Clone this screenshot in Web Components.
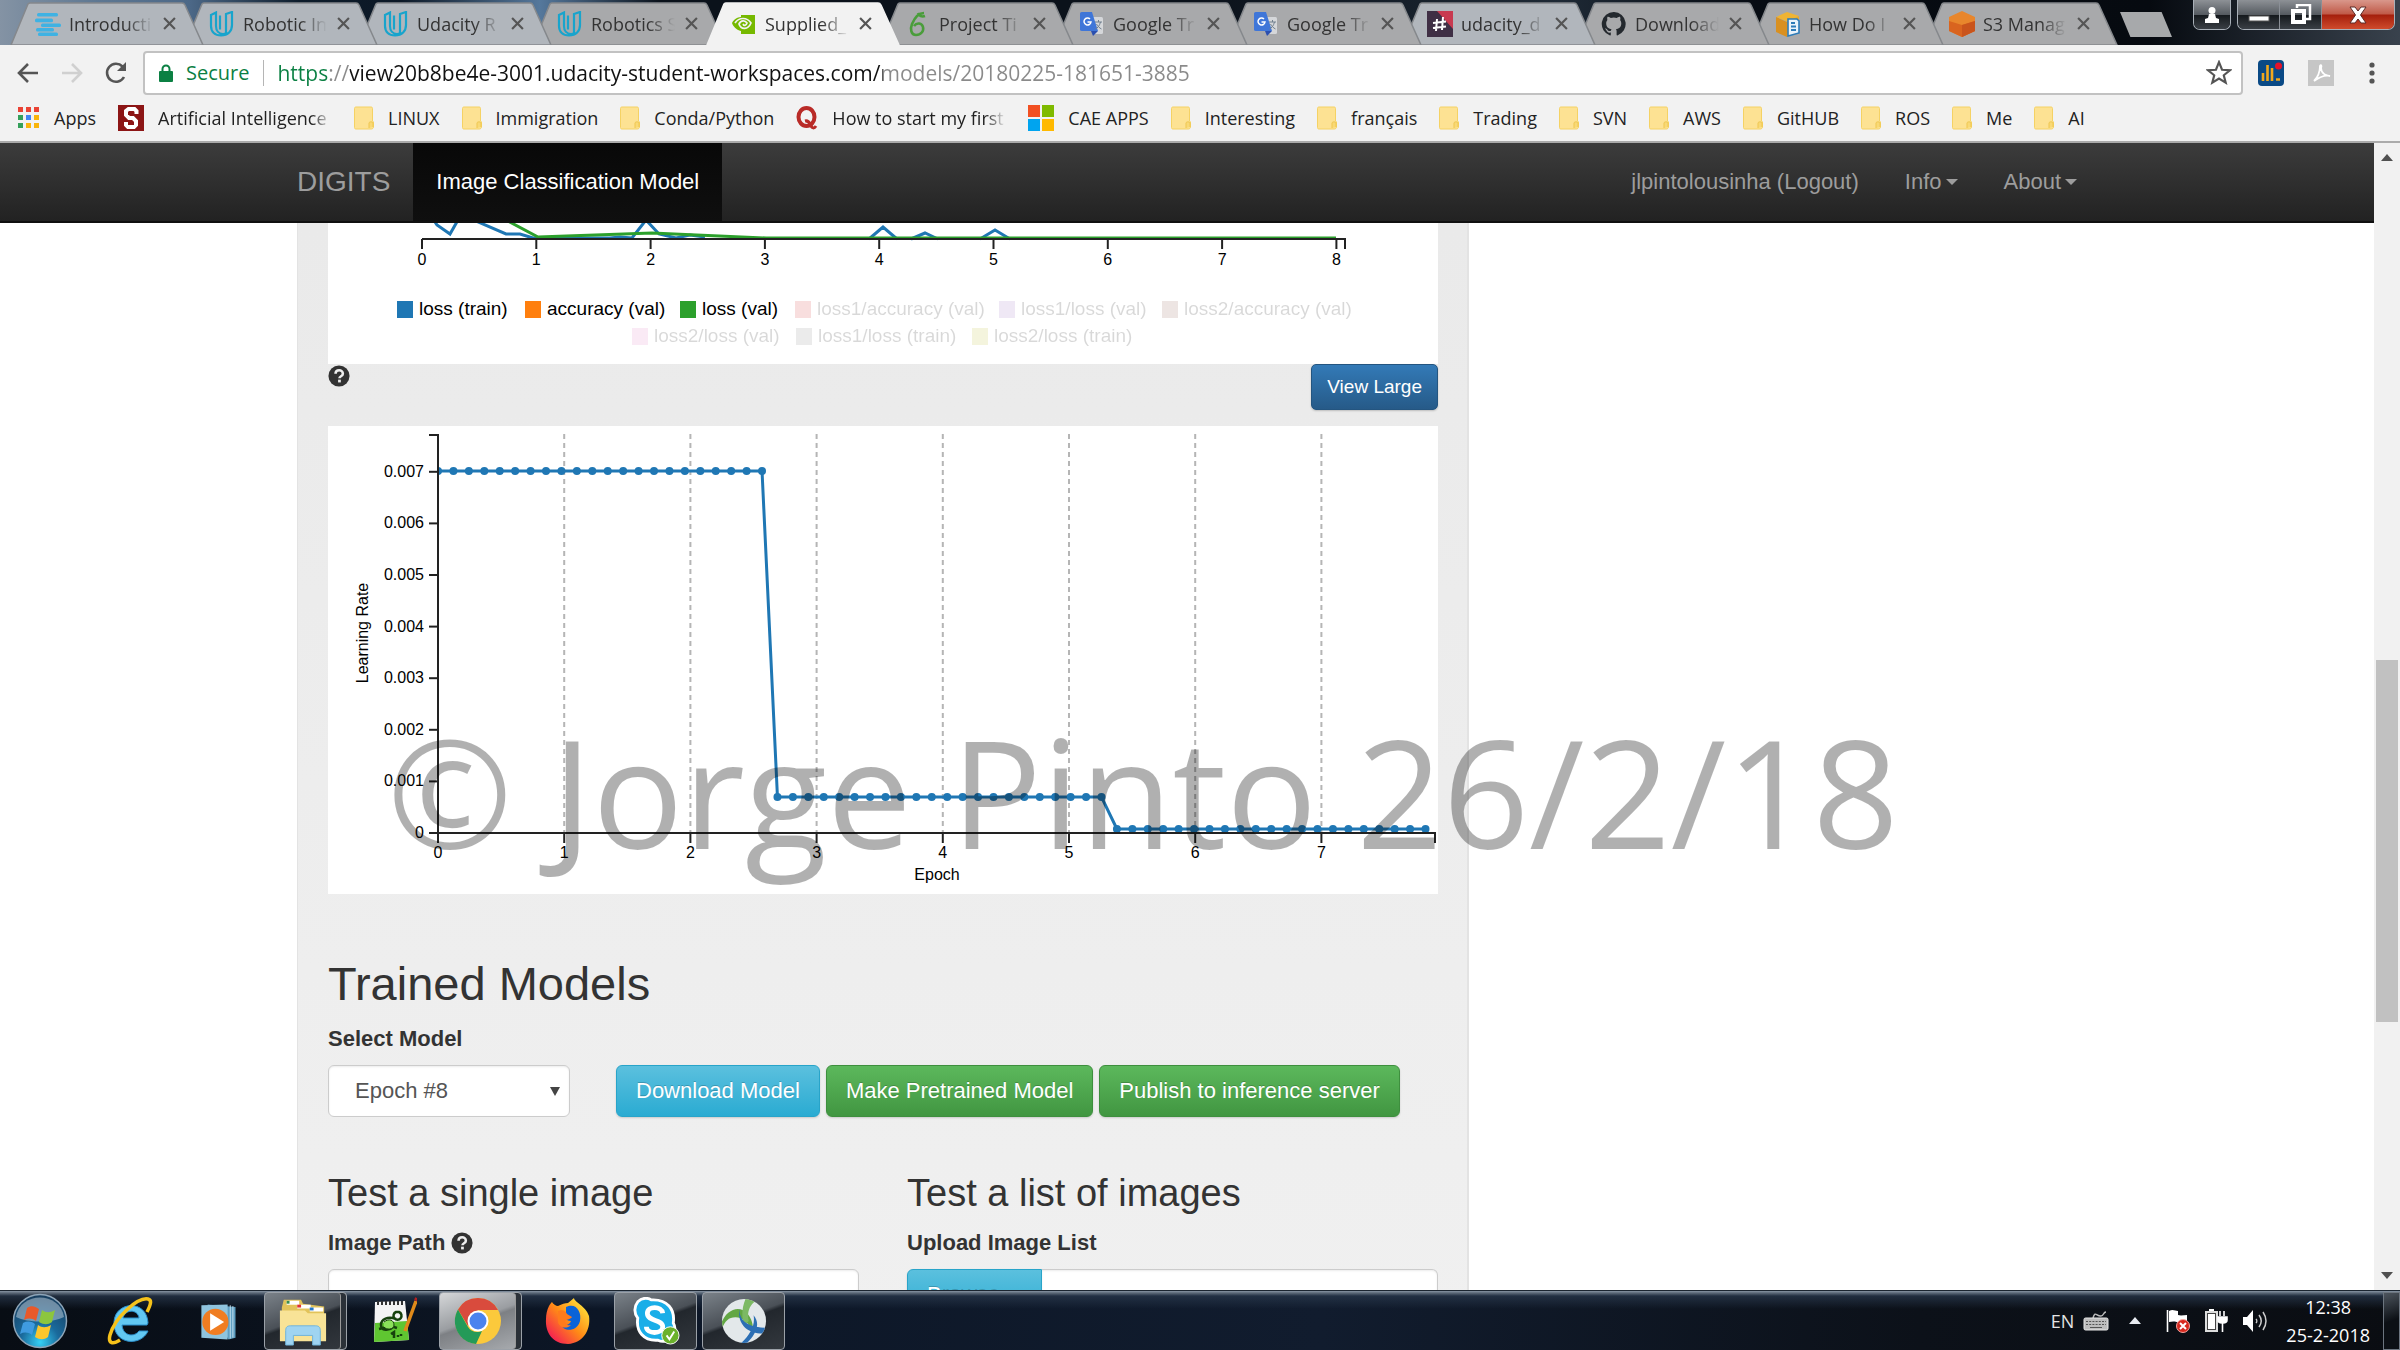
<!DOCTYPE html>
<html lang="en">
<head>
<meta charset="utf-8">
<title>Supplied_ - DIGITS</title>
<style>
  html, body { margin: 0; height: 100%; }
  body { display: flex; flex-direction: column; overflow: hidden; background: #fff;
    font: 22px/32px "Liberation Sans", Arial, sans-serif; color: #333;
    --chrome-font: "Open Sans", "Noto Sans", sans-serif; }
</style>
</head>
<body>
<tab-strip>
  <browser-tab icon="docs" tint="glass">Introducti</browser-tab>
  <browser-tab icon="udacity" tint="glass">Robotic In</browser-tab>
  <browser-tab icon="udacity" tint="glass">Udacity R</browser-tab>
  <browser-tab icon="udacity">Robotics S</browser-tab>
  <browser-tab icon="nvidia" active>Supplied_</browser-tab>
  <browser-tab icon="project">Project Ti</browser-tab>
  <browser-tab icon="translate">Google Tr</browser-tab>
  <browser-tab icon="translate">Google Tr</browser-tab>
  <browser-tab icon="slack" tint="glass">udacity_d</browser-tab>
  <browser-tab icon="github">Download</browser-tab>
  <browser-tab icon="howdo">How Do I</browser-tab>
  <browser-tab icon="cube">S3 Manag</browser-tab>
</tab-strip>
<tool-bar></tool-bar>
<bookmark-bar>
  <book-mark icon="apps">Apps</book-mark>
  <book-mark icon="stanford" long>Artificial Intelligence C</book-mark>
  <book-mark icon="folder">LINUX</book-mark>
  <book-mark icon="folder">Immigration</book-mark>
  <book-mark icon="folder">Conda/Python</book-mark>
  <book-mark icon="quora" long>How to start my first w</book-mark>
  <book-mark icon="microsoft">CAE APPS</book-mark>
  <book-mark icon="folder">Interesting</book-mark>
  <book-mark icon="folder">français</book-mark>
  <book-mark icon="folder">Trading</book-mark>
  <book-mark icon="folder">SVN</book-mark>
  <book-mark icon="folder">AWS</book-mark>
  <book-mark icon="folder">GitHUB</book-mark>
  <book-mark icon="folder">ROS</book-mark>
  <book-mark icon="folder">Me</book-mark>
  <book-mark icon="folder">AI</book-mark>
</bookmark-bar>
<page-view>
  <digits-nav></digits-nav>
  <digits-panel>
    <loss-chart></loss-chart>
    <chart-tools></chart-tools>
    <rate-chart></rate-chart>
    <model-form></model-form>
  </digits-panel>
  <water-mark>© Jorge Pinto 26/2/18</water-mark>
</page-view>
<task-bar></task-bar>

<script>
const ICONS = {
  docs: ['0 0 26 24', '<g fill="#3fb2e3"><rect x="2" y="1" width="21" height="3.6" rx="1.5"/><rect x="0" y="6.6" width="18" height="3.6" rx="1.5"/><rect x="6" y="11.4" width="20" height="3.6" rx="1.5"/><rect x="1" y="16" width="18" height="3.4" rx="1.5"/><rect x="3" y="20.6" width="20" height="3.4" rx="1.5"/></g>'],
  udacity: ['0 0 26 26', '<path d="M2 4 7 1.5V15c0 5 3 8 7 8 2 0 3-1 3-1V3l6-2v13c0 6-4 10.500-11 10.500C6 24.500 2 21 2 15ZM11 4.500v14" fill="none" stroke="#18a4cc" stroke-width="2.200"/>'],
  nvidia: ['0 0 26 26', '<path fill="#76b900" d="M10 4h14v19H10v-3C5 19 2 15 1 12 3 8 6 6.500 10 6Z"/><path d="M4 12c4-6 12-6 16 0-3 7-10 7-12 1 2-4 6-4 8-1-1 3-3 3-4 1" fill="none" stroke="#f2f2f2" stroke-width="1.700"/>'],
  project: ['0 0 26 26', '<path d="M19 2c-5 0-9 4-12 11-2 5-1 11 4 11s8-4 7-8-6-5-9-1M13 2c1 3 4 4 7 3" fill="none" stroke="#4a9d3b" stroke-width="2.600"/>'],
  translate: ['0 0 26 26', '<rect x="13" y="6" width="11" height="17" rx="1.500" fill="#d5d7da"/><path fill="#3f76d8" d="M3 1h10l6 19H3c-2 0-2-1-2-2V3c0-1 0-2 2-2Z"/><path fill="#2b4fae" d="M12 20h7l-5 5Z"/><path d="M11 8a3.500 3.500 0 1 0 1 3H8.500" fill="none" stroke="#fff" stroke-width="1.500"/><path d="M16 11h7M19.500 9v2m2 0c-1 4-3 6-5 7m1-5c1 2 3 4 5 5" stroke="#71808f" fill="none"/>'],
  slack: ['0 0 26 26', '<path fill="#3f2f45" d="M0 0h26v26H0z"/><path fill="#c83a50" d="M10 0h16v18Z"/><path d="M10 8 9 20M16 6l-1 13M6 12l13-1.500M6 17l13-1.500" stroke="#fff" stroke-width="2"/>'],
  github: ['0 0 26 26', '<path fill="#24292e" d="M13 1a12 12 0 0 0-4 23.400c.6.100.8-.3.800-.6v-2.200c-3.300.7-4-1.600-4-1.600-.6-1.400-1.300-1.800-1.300-1.800-1.100-.7.100-.7.100-.7 1.200.1 1.800 1.200 1.800 1.200 1.100 1.800 2.800 1.300 3.500 1 .1-.8.400-1.300.8-1.600-2.700-.3-5.500-1.300-5.500-5.900 0-1.300.5-2.400 1.200-3.200-.1-.3-.5-1.500.1-3.200 0 0 1-.3 3.300 1.200a11.500 11.500 0 0 1 6 0C18 5.500 19 5.800 19 5.800c.7 1.700.3 2.900.1 3.200.8.800 1.200 1.900 1.200 3.200 0 4.600-2.800 5.600-5.500 5.900.4.400.8 1.100.8 2.200v3.500c0 .3.200.7.800.6A12 12 0 0 0 13 1Z"/>'],
  howdo: ['0 0 26 26', '<path fill="#f0b433" d="m1 6 11-5 12 4-11 6Z"/><path fill="#d99020" d="M1 6v15l11 5V11Z"/><path fill="#e8a92e" d="m24 5-12 6v14l12-6Z"/><path d="M13 8h9l2 2v12l-11 3Z" fill="#e9f3fb" stroke="#2c7bb8" stroke-width="1.600"/><path d="M16 12h4M16 15.500h5M16 19h5" stroke="#2c7bb8" stroke-width="1.800"/>'],
  cube: ['0 0 26 26', '<path fill="#e8862c" d="M13 0 26 6v14l-13 6L0 20V6Z"/><path fill="#d9641f" d="m0 10 13 4 13-4v10l-13 6-13-6Z"/><path fill="#c9541c" d="m13 14 13-4v10l-13 6Z"/>'],
  apps: ['0 0 22 22', [['#ea4335','#ea4335','#ea4335'],['#34a05a','#4285f4','#f9b50b'],['#34a05a','#f9b50b','#f9b50b']].map((r,j)=>r.map((c,i)=>`<rect x="${i*8}" y="${j*8}" width="5" height="5" fill="${c}"/>`).join('')).join('')],
  stanford: ['0 0 26 26', '<path fill="#8c1515" d="M0 0h26v26H0z"/><path d="M18.500 9V6l-2-2h-6L8 6v4l3 3h4l3 3v4l-2 2h-6l-2-2v-3" fill="none" stroke="#fff" stroke-width="4"/>'],
  folder: ['0 0 20 24', '<path d="M2 1h15c1 0 1.500.5 1.500 1.500V15l1 1v5c0 1-1 2-2 2H2c-1 0-1.500-.5-1.500-1.500v-19C.5 1.500 1 1 2 1Z" fill="#fde293" stroke="#f5d264"/><path d="M15 22v-5c0-1 3-2 4 0v4" fill="#f9d976" stroke="#efc750"/>'],
  quora: ['0 0 22 24', '<ellipse cx="10.500" cy="11" rx="8" ry="9" fill="none" stroke="#b92b27" stroke-width="4"/><path d="M9 15c4-1 5 3 6 5s3 3 5 0" fill="none" stroke="#b92b27" stroke-width="3"/>'],
  microsoft: ['0 0 26 26', '<path fill="#f25022" d="M0 0h12v12H0z"/><path fill="#7fba00" d="M14 0h12v12H14z"/><path fill="#00a4ef" d="M0 14h12v12H0z"/><path fill="#ffb900" d="M14 14h12v12H14z"/>'],
  back: ['0 0 24 24', '<path d="M22 12H4m8-9-9 9 9 9" fill="none" stroke="#555" stroke-width="2.600"/>'],
  forward: ['0 0 24 24', '<path d="M2 12h18m-8-9 9 9-9 9" fill="none" stroke="#d0d0d0" stroke-width="2.600"/>'],
  reload: ['0 0 24 24', '<path d="M20 16a9 9 0 1 1-1.500-10.500" fill="none" stroke="#555" stroke-width="2.600"/><path d="M22 1v9h-9Z" fill="#555"/>'],
  lock: ['0 0 14 18', '<rect x="0" y="7" width="14" height="11" rx="1" fill="#0b8043"/><path d="M3.500 8V5a3.500 3.500 0 0 1 7 0v3" fill="none" stroke="#0b8043" stroke-width="2"/>'],
  star: ['0 0 24 24', '<path d="m12 2 2.800 7 7.200.5-5.600 4.600L18.200 21 12 17.200 5.800 21l1.800-6.900L2 9.500 9.200 9Z" fill="none" stroke="#555" stroke-width="2"/>'],
  stats: ['0 0 26 26', '<rect width="26" height="26" rx="4" fill="#0a4a86"/><path d="M5 13v8M9.500 5v16M14 8v13M18 19.500h4" stroke="#f0a81c" stroke-width="2.600" /><circle cx="20.500" cy="6" r="3.500" fill="#e5122a"/>'],
  pdf: ['0 0 26 26', '<path fill="#c6c6c6" d="M0 0h26v26H0z"/><path d="M6 21c3-3 6-8 6-15 1-2 2 0 1 2 0 5 5 8 9 8-4-1-9 0-16 5Z" fill="none" stroke="#fff" stroke-width="1.800"/>'],
  dots: ['0 0 6 22', '<g fill="#555"><circle cx="3" cy="3" r="2.600"/><circle cx="3" cy="11" r="2.600"/><circle cx="3" cy="19" r="2.600"/></g>'],
  close: ['0 0 12 12', '<path d="m1 1 10 10M11 1 1 11" stroke="#555" stroke-width="2"/>'],
  help: ['0 0 24 24', '<circle cx="12" cy="12" r="11.500" fill="#333"/><path d="M8.200 9.500c0-5 8-5 8 0 0 3-3.700 2.500-3.700 5" fill="none" stroke="#eee" stroke-width="2.800"/><path fill="#eee" d="M11 16h3v3h-3z"/>'],
  user: ['0 0 20 20', '<g fill="#fff"><circle cx="10" cy="5.500" r="3.500"/><path d="M7 9h6l1 4 3 1v4H3v-4l3-1Z"/></g>'],
  min: ['0 0 22 22', '<rect x="1" y="12" width="20" height="5" fill="#fff" stroke="#555"/>'],
  restore: ['0 0 22 22', '<path d="M7 4V1h13v14h-4" fill="none" stroke="#fff" stroke-width="2.500"/><rect x="3" y="7" width="11" height="11" fill="none" stroke="#fff" stroke-width="4"/>'],
  exit: ['0 0 18 18', '<path d="M1 1h5l3 4 3-4h5l-5.500 8L17 17h-5l-3-4-3 4H1l5.500-8Z" fill="#fff" stroke="#5b2a26"/>'],
  orb: ['0 0 56 56', '<defs><radialGradient id="o" cx=".5" cy=".9" r=".9"><stop offset="0" stop-color="#35d0f5"/><stop offset=".4" stop-color="#1a6a9c"/><stop offset="1" stop-color="#173b5b"/></radialGradient></defs><circle cx="28" cy="28" r="26.500" fill="url(#o)" stroke="#8ea5b8" stroke-width="1.500"/><path d="M4 24C8-2 48-2 52 24c-12 6-36 6-48 0Z" fill="#c5d4e0" opacity=".5"/><path fill="#e8592a" d="M15 15c4-3 8-2 12 1l-3 12c-4-3-8-3-12-1Z"/><path fill="#8cc63e" d="M30 17c4 3 8 3 13 0l-3 12c-4 3-8 3-13 0Z"/><path fill="#3f9be0" d="M11 30c4-2 8-2 12 1l-3 11c-4-3-8-3-12-1Z"/><path fill="#fcc62d" d="M26 32c4 3 8 3 13 0l-3 12c-4 3-8 3-13 0Z"/>'],
  ie: ['0 0 48 48', '<path d="M40 28H15c1 12 13 12 17 6h9C34 50 6 48 7 25 8 4 40 2 41 26ZM16 21h16c-1-9-14-9-16 0Z" fill="#62c8f2" stroke="#2b8fcc"/><path d="M40 15c4-8 5-12 1-13C31 0 8 20 3 38c-2 8 2 10 10 5" fill="none" stroke="#f6c21a" stroke-width="3.500"/>'],
  media: ['0 0 48 48', '<path fill="#5f9fc2" d="m12 5 32 3v35l-8 2Z"/><path fill="#8fc4de" d="m5 6 30-1v40L5 43Z"/><path d="M38 6v38m3-37v36" stroke="#cfe8f4"/><circle cx="21" cy="25" r="15" fill="#f07d22"/><path fill="#fff" d="m15 15 16 10-16 10Z"/>'],
  explorer: ['0 0 52 52', '<path fill="#e2c35a" d="M4 12 6 4h18l2 4 22 3v32H4Z"/><path fill="#fff" d="M9 5h13v4H9zM20 9h14v4H20zM33 12h14v4H33z"/><path fill="#3a8d4f" d="M9 5h3v3H9z"/><path fill="#d33" d="M20 9h4v3h-4z"/><path fill="#27c" d="M33 12h4v3h-4z"/><path fill="#f8e397" d="M2 15h26l3 3h19v29H2Z"/><path fill="#9fd4f1" stroke="#6fb3da" d="M8 51V36c0-4 2-5 5-5h26c3 0 5 1 5 5v15h-8V41H16v10Z"/>'],
  npp: ['0 0 48 48', '<path fill="#f4f4f4" d="m6 5 30-1 4 39L5 45Z"/><path fill="#5fc631" d="m6 26 32-2 2 19L5 45Z"/><path d="M8 6h26" stroke="#333" stroke-width="4" stroke-dasharray="2 2"/><path d="M27 15a4 4 0 1 0 3 0ZM27 22c-8-3-15 0-15 6s8 6 12 2M10 32l12-3 6 2M22 37l3-2v6m4-3v2m3-3v2" fill="none" stroke="#17410d" stroke-width="2.500"/><path d="M15 25c5-4 10-2 10 3s-8 5-10 2" fill="#8be05b" stroke="#17410d"/><path d="M47 4 36 34" stroke="#e08a1a" stroke-width="3.500"/><path d="m47 4 1-3" stroke="#b52020" stroke-width="4"/>'],
  chrome: ['0 0 48 48', '<circle cx="24" cy="24" r="23" fill="#fbc93c"/><path fill="#d94b3d" d="M4 12.500A23 23 0 0 1 44 13H24L14 29Z"/><path fill="#249a58" d="M4 12.500 14 30c3 5 9 6 14 4l-6 13A23 23 0 0 1 4 12.500Z"/><circle cx="24" cy="24" r="10.500" fill="#fff"/><circle cx="24" cy="24" r="8.500" fill="#4a83ee"/>'],
  firefox: ['0 0 48 48', '<defs><linearGradient id="f" x1="1" y1="0" x2="0" y2="1"><stop offset=".1" stop-color="#ffe33a"/><stop offset=".5" stop-color="#ff8a16"/><stop offset=".85" stop-color="#f5284e"/></linearGradient></defs><path d="M5 9c1-2 2-3 3-4 1 2 4 4 6 4 4-2 7-3 10-3l6-5c0 4 12 8 15 18 2 14-6 27-21 28C9 47 1 36 2 22c0-5 1-9 3-13Z" fill="url(#f)"/><path d="M22 10c10-5 16 5 14 14-3 12-18 10-18 4 5 1 8-1 9-4-4 0-8-3-5-8Z" fill="#0a63d8"/><path d="M14 14c4-2 8 0 9 3l5 3c-2 3-6 2-7 4-1 3 3 5 6 4-5 5-13 2-13-4Z" fill="#ff7b1c"/>'],
  skype: ['0 0 50 50', '<path d="M6 5c5-5 11-4 14-2 17-1 25 10 23 24 3 5 2 11-2 15-4 5-10 5-14 3C12 46 4 36 6 22 2 17 2 10 6 5Z" fill="#1aaee8" stroke="#fff" stroke-width="3"/><path d="M32 17c-1-8-16-8-16 0 0 9 16 6 16 14 0 8-17 8-17 0" fill="none" stroke="#fff" stroke-width="5"/><circle cx="40" cy="40" r="9" fill="#6bb12c" stroke="#fff"/><path d="m36 40 3 4 5-8" fill="none" stroke="#fff" stroke-width="2"/>'],
  cisco: ['0 0 48 48', '<clipPath id="k"><circle cx="24" cy="24" r="23"/></clipPath><g clip-path="url(#k)"><path fill="#e3e8ea" d="M0 0h48v48H0z"/><path d="M0 27C6 11 20 7 28 17c4 5 6 11 5 18-4-9-10-15-18-15C8 20 4 24 1 32Z" fill="#63a744"/><path d="m26 0 10 3c-7 5-9 13-7 21l-5 5c-3-10-2-20 2-29Z" fill="#7cb964"/><path d="M19 11c0 13 9 20 29 20l-2 6c-18 1-29-9-27-26ZM34 18c8 9 2 21-8 30h-6c10-9 16-19 14-30Z" fill="#2c6fb4"/></g>'],
  keyboard: ['0 0 26 20', '<path d="M10 7c2-8 4-1 8-2 3 0 2-4 5-4" fill="none" stroke="#bbb" stroke-width="1.500"/><rect x="1" y="7" width="24" height="12" rx="1.500" fill="#bdbdbd" stroke="#e8e8e8"/><path d="M3 10.500h20M3 13.500h20" stroke="#555" stroke-dasharray="2 1.200"/><path d="M7 16.500h12" stroke="#555"/>'],
  up: ['0 0 12 8', '<path fill="#e8ecf2" d="m6 0 6 7H0Z"/>'],
  flag: ['0 0 24 24', '<path d="M1.500 1v22" stroke="#fff" stroke-width="1.600"/><path fill="#fff" d="M3 2c4-2 6 0 9 0v4c3 1 6 0 9 0v9c-8 0-10-4-18-2Z"/><circle cx="17" cy="17" r="6.500" fill="#d6281e" stroke="#f6a49e"/><path d="m14 14 6 6m0-6-6 6" stroke="#fff" stroke-width="2"/>'],
  battery: ['0 0 24 24', '<path d="M5 1h5" stroke="#fff" stroke-width="3"/><rect x="2" y="3" width="11" height="19" fill="#fff" stroke="#ddd" stroke-width="2"/><rect x="3.500" y="4.500" width="8" height="16" fill="none" stroke="#444"/><path d="M16 2v5m4-5v5M14 8h9v3c0 2-2 3-4 3h-1c-2 0-4-1-4-3ZM18.500 14v9" fill="#fff" stroke="#fff" stroke-width="1.600"/>'],
  speaker: ['0 0 26 24', '<path fill="#fff" d="M1 8h4l6-7v22l-6-7H1Z"/><path d="M14 10c1 1 1 3 0 4m3-8c3 4 3 8 0 12m4-15c4 6 4 12 0 18" fill="none" stroke="#ccc" stroke-width="1.500"/>']
};
const icon = (name, w, h = w) => {
  const [box, art] = ICONS[name];
  return `<svg class="i" aria-hidden="true" viewBox="${box}" width="${w}" height="${h}">${art}</svg>`;
};
const BASE = `:host,*{box-sizing:border-box}.i{display:block;flex:none}button{font:inherit;color:inherit;border:0;background:none;padding:0;margin:0;cursor:pointer}a{color:inherit;text-decoration:none}`;
const define = (tag, css, html) => customElements.define(tag, class extends HTMLElement {
  constructor() {
    super();
    this.attachShadow({ mode: 'open' }).innerHTML =
      `<style>${BASE}${css}</style>${typeof html === 'function' ? html(this) : html}`;
  }
});

/* ---------- browser window ---------- */
define('tab-strip', `
  :host{display:flex;flex:none;height:45px;padding-left:10px;justify-content:space-between;position:relative;
    background:linear-gradient(90deg,#8493a4 0,#5d7792 100px,#4c6887 190px,#0d1c2b 300px,#0c1826 400px,#55789c 540px,#0b121b 660px,#0b121b 1200px,#1e2935 1560px,#070c13 1750px,#060a10 2150px,#39424d 2400px)}
  .tabs{display:flex;padding-top:2px}
  .new{width:52px;height:25px;margin:10px 0 0 22px;background:#a7a9ab;clip-path:polygon(0 0,80% 0,100% 100%,20% 100%)}
  .ctl{display:flex;gap:6px;height:30px;padding-right:5px}
  .grp{display:flex;border:1px solid #a9b0b8;border-top:0;border-radius:0 0 7px 7px;overflow:hidden}
  .ctl button{display:grid;place-items:center;width:42px;background:linear-gradient(#8d9196,#565b61 50%,#15191d 52%,#3a3f45);border-right:1px solid #8a8f96}
  .ctl .u{width:36px;border:0}
  .ctl .x{width:72px;border:0;background:linear-gradient(#d9978b,#c05a48 48%,#a51f0c 52%,#cf4b2c)}`,
  `<div class="tabs" role="tablist"><slot></slot><button class="new" aria-label="New tab"></button></div>
   <div class="ctl"><div class="grp"><button class="u" aria-label="Profile">${icon('user',20)}</button></div>
   <div class="grp"><button aria-label="Minimize">${icon('min',22)}</button><button aria-label="Restore">${icon('restore',22)}</button><button class="x" aria-label="Close">${icon('exit',18)}</button></div></div>`);

define('browser-tab', `
  :host{display:flex;align-items:center;position:relative;width:194px;height:43px;margin-right:-20px;padding:0 28px 0 25px;
    font:18px/24px var(--chrome-font);color:#333;--fill:#a8a9ab}
  :host([tint]){--fill:#b1b6bc}
  :host([active]){--fill:#f2f2f2;z-index:20}
  .bg{position:absolute;inset:0;width:100%;height:100%;z-index:0}
  .bg path{fill:var(--fill);stroke:#85888c;stroke-width:1.500}
  :host([active]) .bg path{stroke:#f2f2f2}
  .i,.t,.c{position:relative}
  .t{flex:1;margin:0 10px 0 8px;overflow:hidden;white-space:nowrap;-webkit-mask-image:linear-gradient(90deg,#000 68%,transparent)}`,
  el => `<svg class="bg" aria-hidden="true" viewBox="0 0 194 43" preserveAspectRatio="none"><path d="M1 43 18 2q1-1 2-1h152q2 0 3 2l18 40Z"/></svg>
   ${icon(el.getAttribute('icon'), 26)}<span class="t" role="tab"><slot></slot></span><button class="c" aria-label="Close tab">${icon('close', 13)}</button>`);
document.querySelectorAll('browser-tab:not([active])').forEach((t, i) => t.style.zIndex = 12 - i);

define('tool-bar', `
  :host{display:flex;flex:none;align-items:center;height:50px;padding:6px 25px 0 16px;background:#f2f2f2;font:20px/28px var(--chrome-font)}
  nav{display:flex;gap:20px;margin-right:15px}
  .box{flex:1;display:flex;align-items:center;height:44px;border:2px solid #c2c2c2;border-radius:4px;background:#fff;padding:0 9px 0 14px}
  .s{color:#0b8043;margin:0 14px 0 13px}
  .bar{width:1px;height:26px;background:#b5b5b5;margin-right:13px}
  input{flex:1;min-width:0;border:0;outline:0;padding:0;font:inherit;font-size:21px;height:28px;-webkit-text-fill-color:transparent;
    background:linear-gradient(90deg,#0b8043 0 51px,#8a8a8a 51px 73px,#111 73px 606px,#8a8a8a 606px);-webkit-background-clip:text;background-clip:text}
  .ext{display:flex;align-items:center;gap:24px;margin-left:15px}
  .ext button:last-child{margin-left:11px}`,
  `<nav><button aria-label="Back">${icon('back',24)}</button><button aria-label="Forward">${icon('forward',24)}</button><button aria-label="Reload">${icon('reload',24)}</button></nav>
   <div class="box">${icon('lock',14,18)}<label class="s" for="url">Secure</label><span class="bar"></span>
   <input id="url" type="text" spellcheck="false" value="https://view20b8be4e-3001.udacity-student-workspaces.com/models/20180225-181651-3885">
   <button aria-label="Bookmark">${icon('star',26)}</button></div>
   <div class="ext"><button aria-label="Statistics">${icon('stats',26)}</button><button aria-label="PDF">${icon('pdf',26)}</button><button aria-label="Menu">${icon('dots',6,22)}</button></div>`);

define('bookmark-bar', `
  :host{display:flex;flex:none;align-items:center;gap:22px;height:48px;padding:0 18px;background:#f2f2f2;border-bottom:2px solid #ababab;font:18px/24px var(--chrome-font);color:#222}`,
  `<slot></slot>`);
define('book-mark', `
  :host{display:block} a{display:flex;align-items:center;gap:14px;white-space:nowrap}
  :host([long]) span{width:174px;overflow:hidden;-webkit-mask-image:linear-gradient(90deg,#000 88%,transparent)}`,
  el => { const n = el.getAttribute('icon'); const [w, h] = n === 'folder' ? [20, 24] : n === 'apps' ? [22, 22] : n === 'quora' ? [22, 24] : [26, 26];
    return `<a href="#">${icon(n, w, h)}<span><slot></slot></span></a>`; });

/* ---------- page ---------- */
define('page-view', `
  :host{display:flex;flex:1;min-height:0;position:relative;overflow:hidden}
  main{flex:1;min-width:0;overflow:hidden;background:#fff}
  .sb{display:flex;flex-direction:column;align-items:center;width:26px;padding:11px 2px;background:#f1f1f1}
  .a{width:0;height:0;border:6px solid transparent;border-top:0;border-bottom:7px solid #505050}
  .a.d{border-bottom:0;border-top:7px solid #505050}
  .track{flex:1;width:100%;display:flex;flex-direction:column;padding:7px 0}
  .track::before{content:"";flex:492}.thumb{flex:361;background:#c1c1c1}.track::after{content:"";flex:243}`,
  `<main><slot></slot></main><div class="sb" aria-hidden="true"><i class="a"></i><div class="track"><div class="thumb"></div></div><i class="a d"></i></div>`);

define('digits-nav', `
  :host{display:block;height:80px;background:linear-gradient(#3c3c3c,#222);border-bottom:2px solid #101010;color:#9d9d9d}
  nav{display:flex;align-items:stretch;max-width:1780px;height:100%;margin:0 auto}
  a{display:flex;align-items:center;padding:0 23px}
  .b{font-size:28px;padding-left:0}
  .on{color:#fff;background:linear-gradient(#080808,#0f0f0f)}
  .r{display:flex;margin-left:auto}.r a:last-child{padding-right:0}
  .c{border:6px solid transparent;border-top-color:currentColor;border-bottom:0;margin-left:4px}`,
  `<nav><a class="b" href="#">DIGITS</a><a class="on" href="#">Image Classification Model</a>
   <div class="r"><a href="#">jlpintolousinha (Logout)</a><a href="#">Info<i class="c"></i></a><a href="#">About<i class="c"></i></a></div></nav>`);

define('digits-panel', `
  :host{display:block;max-width:1780px;margin:0 auto}
  section{width:1172px;max-width:100%;min-height:1120px;padding:0 29px 0 30px;border:1px solid #e3e3e3;border-width:0 2px 0 1px;background:linear-gradient(#eaeaea,#f0f0f0)}`,
  `<section><slot></slot></section>`);

const CHART_CSS = `:host{display:block;background:#fff}svg{display:block;width:100%;height:auto;font:16px "Liberation Sans",Arial,sans-serif;fill:#000}
  .ax{fill:none;stroke:#222;stroke-width:2}.l{fill:none;stroke-width:3}.m{text-anchor:middle}.e{text-anchor:end}`;

define('loss-chart', CHART_CSS + `.lg{font-size:19px}.off{opacity:.15}`, () => {
  const ticks = [...Array(9)].map((_, i) => { const x = 94 + i * 114.3; return `<path class="ax" d="M${x} 16v10"/><text class="m" x="${x}" y="42">${i}</text>`; }).join('');
  const legend = [[69,93,0,'#1f77b4','loss (train)'],[197,93,0,'#ff7f0e','accuracy (val)'],[352,93,0,'#2ca02c','loss (val)'],
    [467,93,1,'#d62728','loss1/accuracy (val)'],[671,93,1,'#9467bd','loss1/loss (val)'],[834,93,1,'#8c564b','loss2/accuracy (val)'],
    [304,120,1,'#e377c2','loss2/loss (val)'],[468,120,1,'#7f7f7f','loss1/loss (train)'],[644,120,1,'#bcbd22','loss2/loss (train)']]
    .map(([x,y,off,c,t]) => `<g class="lg${off ? ' off' : ''}"><rect x="${x}" y="${y-15}" width="16" height="17" fill="${c}"/><text x="${x+22}" y="${y-1}">${t}</text></g>`).join('');
  return `<svg viewBox="0 0 1110 141" role="img" aria-label="Training loss by epoch">
    <path class="l" stroke="#1f77b4" d="M107-1l2 3 13 9 8-14M148-2l30 13h14l13 4h77l10-1 12 1 14-18 13 14 17 4 14-3 15 2M541 16l14-12 14 12M583 16l14-6 13 6M652 16l15-9 15 9"/>
    <path class="l" stroke="#2ca02c" d="M178-3l32 17 114-4 114 5h570"/>
    <path class="ax" d="M94 16h923v10"/>${ticks}${legend}</svg>`;
});

define('chart-tools', `
  :host{display:flex;justify-content:space-between;align-items:flex-start;height:62px}
  .h{margin-top:1px}
  .v{height:46px;padding:0 15px;border:1px solid #245580;border-radius:5px;color:#fff;font-size:19px;background:linear-gradient(#337ab7,#265a88);box-shadow:0 1px 2px rgba(0,0,0,.2)}`,
  `<button class="h" aria-label="Help">${icon('help',22)}</button><button class="v">View Large</button>`);

define('rate-chart', CHART_CSS + `.g{stroke:#b5b5b5;stroke-width:2;stroke-dasharray:5 4}.p{fill:#1f77b4}`, () => {
  const X = i => 110 + i * 15.43, level = i => i < 22 ? 45 : i < 44 ? 371 : 403;
  const pts = [...Array(65)].map((_, i) => [X(i), level(i)]);
  const xt = [...Array(8)].map((_, i) => { const x = 110 + i * 126.2; return `${i ? `<path class="g" d="M${x} 8v399"/>` : ''}<path class="ax" d="M${x} 407v10"/><text class="m" x="${x}" y="432">${i}</text>`; }).join('');
  const yt = [...Array(8)].map((_, i) => { const y = 407 - i * 51.6; return `<path class="ax" d="M101 ${y}h9"/><text class="e" x="96" y="${y+5}">${i ? '0.00' + i : '0'}</text>`; }).join('');
  return `<svg viewBox="0 0 1110 468" role="img" aria-label="Learning rate by epoch">
    <clipPath id="c"><path d="M110 0h1000v407H110z"/></clipPath>${xt}${yt}
    <g clip-path="url(#c)"><path class="l" stroke="#1f77b4" d="M${pts.map(p => p.join(' ')).join('L')}"/>${pts.map(p => `<circle class="p" cx="${p[0]}" cy="${p[1]}" r="4"/>`).join('')}</g>
    <path class="ax" d="M101 9h9v398h997v10"/>
    <text class="m" x="609" y="454">Epoch</text><text class="m" transform="translate(40 207) rotate(-90)">Learning Rate</text></svg>`;
});

define('model-form', `
  :host{display:block}
  h2,h3{margin:0 0 13px;font-weight:400}
  h2{font-size:47px;line-height:52px;padding-top:64px}
  h3{font-size:38px;line-height:42px}
  label{display:flex;align-items:center;gap:6px;font-weight:700;margin-bottom:10px}
  .row{display:flex;gap:6px;margin-bottom:55px}
  .sel{position:relative;width:242px;margin-right:40px}
  .sel::after{content:"";position:absolute;right:10px;top:22px;border:5px solid transparent;border-top:9px solid #444;border-bottom:0;pointer-events:none}
  select,.in{width:100%;height:52px;border:1px solid #ccc;border-radius:6px;background:#fff;box-shadow:inset 0 1px 2px rgba(0,0,0,.08);font:inherit;color:#555}
  select{appearance:none;padding:0 26px}
  .in{padding:0 18px;min-width:0}
  .b{height:52px;padding:0 19px;border:1px solid #3e8f3e;border-radius:6px;color:#fff;background:linear-gradient(#5cb85c,#419641);text-shadow:0 -1px 0 rgba(0,0,0,.2);box-shadow:0 1px 2px rgba(0,0,0,.15)}
  .b.blue{border-color:#28a4c9;background:linear-gradient(#5bc0de,#2aabd2)}
  .cols{display:grid;grid-template-columns:1fr 1fr;gap:48px}
  .up{display:flex}.up .b{border-radius:6px 0 0 6px}.up .in{border-radius:0 6px 6px 0;border-left:0}`,
  `<h2>Trained Models</h2><label for="m">Select Model</label>
   <div class="row"><div class="sel"><select id="m"><option>Epoch #8</option></select></div>
   <button class="b blue">Download Model</button><button class="b">Make Pretrained Model</button><button class="b">Publish to inference server</button></div>
   <div class="cols"><div><h3>Test a single image</h3><label for="p">Image Path ${icon('help',22)}</label><input class="in" id="p" type="text"></div>
   <div><h3>Test a list of images</h3><label for="u">Upload Image List</label><div class="up"><button class="b blue">Browse…</button><input class="in" id="u" type="text" readonly></div></div></div>`);

define('water-mark', `
  :host{position:absolute;left:387px;top:573px;font:151px/150px "Open Sans",sans-serif;color:rgba(0,0,0,.31);white-space:nowrap;pointer-events:none}`,
  `<slot></slot>`);

/* ---------- desktop ---------- */
define('task-bar', `
  :host{display:flex;flex:none;justify-content:space-between;height:60px;border-top:1px solid #1b2530;color:#fff;font:18px/28px var(--chrome-font);
    background:linear-gradient(#8794a3 0,#5b6877 2px,rgba(40,55,75,.75) 5px,rgba(10,15,22,0) 18px),linear-gradient(90deg,#080d14,#0c1626 25%,#111c2e 55%,#0c1119 80%,#0a0d12)}
  .apps{display:flex;align-items:center;padding-left:12px}
  .apps button{display:grid;place-items:center;height:58px;width:83px}
  .apps .orb{width:56px}.apps .p1{width:82px;margin-left:22px}
  .apps .n{width:92px}
  .apps .on{background:linear-gradient(160deg,#7b8289,#4a5057 45%,#22272d 50%,#33383e);border:1px solid #9ba1a8;border-radius:4px}
  .apps .hot{background:linear-gradient(160deg,#d5d7d9,#9a9da1 45%,#7d8084 50%,#a9acb0)}
  .apps .st{padding-right:6px;box-shadow:inset -5px 0 0 #2b3138,inset -6px 0 0 #999}
  .apps .last{margin-left:5px}
  .tray{display:flex;align-items:center}
  .tray .i{margin-right:14px}
  .up{margin:0 11px 0 6px}
  .en{margin-right:9px;color:#e4e4e4}
  .clock{display:flex;flex-direction:column;align-items:center;margin:0 13px 0 4px}
  .desk{width:17px;height:58px;border:1px solid #6c757f;background:linear-gradient(160deg,#4d555e,#0c1015 50%)}`,
  `<div class="apps"><button class="orb" aria-label="Start">${icon('orb',56)}</button>
   <button class="p1" aria-label="Internet Explorer">${icon('ie',48)}</button><button class="n" aria-label="Media Player">${icon('media',42)}</button>
   <button class="on st" aria-label="Explorer">${icon('explorer',50)}</button><button class="n" aria-label="Notepad++">${icon('npp',48)}</button>
   <button class="on st hot" aria-label="Chrome">${icon('chrome',48)}</button><button class="n" aria-label="Firefox">${icon('firefox',48)}</button>
   <button class="on" aria-label="Skype">${icon('skype',48)}</button><button class="on last" aria-label="AnyConnect">${icon('cisco',46)}</button></div>
   <div class="tray"><span class="en">EN</span>${icon('keyboard',26,20)}<button class="up" aria-label="Show hidden icons">${icon('up',12,8)}</button>${icon('flag',24)}${icon('battery',24)}${icon('speaker',26,24)}
   <div class="clock"><span>12:38</span><span>25-2-2018</span></div><button class="desk" aria-label="Show desktop"></button></div>`);
</script>
</body>
</html>
